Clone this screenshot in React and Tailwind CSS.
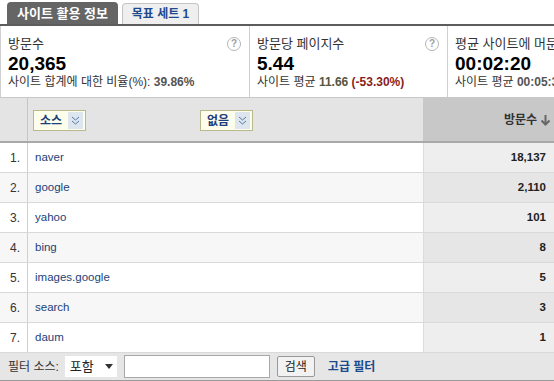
import React from 'react';

const rows = [
  { n: '1.', src: 'naver', v: '18,137' },
  { n: '2.', src: 'google', v: '2,110' },
  { n: '3.', src: 'yahoo', v: '101' },
  { n: '4.', src: 'bing', v: '8' },
  { n: '5.', src: 'images.google', v: '5' },
  { n: '6.', src: 'search', v: '3' },
  { n: '7.', src: 'daum', v: '1' },
];

function Help() {
  return (
    <div className="absolute right-[8px] top-[11px] flex h-[14px] w-[14px] items-center justify-center rounded-full border border-[#b5b5b5] text-[10px] font-bold leading-none text-[#a0a0a0]">
      ?
    </div>
  );
}

function Chevrons() {
  return (
    <div className="flex h-[17px] w-[15px] items-center justify-center bg-[#dde6ee]">
      <svg width="9" height="11" viewBox="0 0 9 11" fill="none" stroke="#5578a8" strokeWidth="1">
        <polyline points="1,2 4.5,5 8,2" />
        <polyline points="1,6 4.5,9 8,6" />
      </svg>
    </div>
  );
}

function DimSelect({ label }) {
  return (
    <div className="flex h-[21px] w-[53px] items-center justify-between border border-[#b9b98e] bg-[#fdfdec] pl-[6px] pr-[2px]">
      <span className="text-[12px] font-bold leading-none text-[#1c3f7c]">{label}</span>
      <Chevrons />
    </div>
  );
}

export default function App() {
  return (
    <div
      className="relative h-[381px] w-[554px] overflow-hidden bg-white text-[#333]"
      style={{ fontFamily: '"Liberation Sans", "Noto Sans CJK KR", sans-serif' }}
    >
      {/* tabs */}
      <div className="flex h-[24px] items-end gap-[4px] pl-[7px]">
        <div className="flex h-[22px] w-[111px] items-center justify-center rounded-t-[4px] bg-[#656565] text-[13px] font-bold leading-none text-white">
          사이트 활용 정보
        </div>
        <div className="flex h-[21px] w-[77px] items-center justify-center rounded-t-[4px] border border-b-0 border-[#c4c4c4] bg-[#efefef] text-[12px] font-bold leading-none text-[#1c4a8c]">
          목표 세트 1
        </div>
      </div>
      <div className="h-[2px] bg-[#5c5c5c]" />

      {/* metrics */}
      <div className="flex h-[72px] border-b border-[#c8c8c8]">
        <div className="relative w-[250px] flex-none border-l border-r border-[#d0d0d0] px-[7px] pt-[10px]">
          <div className="text-[13px] leading-[16px] text-[#333]">방문수</div>
          <div className="mt-[1px] text-[19px] font-bold leading-[22px] text-black">20,365</div>
          <div className="text-[12px] leading-[15px] text-[#333]">
            사이트 합계에 대한 비율(%): <span className="font-semibold text-[#555]">39.86%</span>
          </div>
          <Help />
        </div>
        <div className="relative w-[198px] flex-none border-r border-[#d0d0d0] px-[7px] pt-[10px]">
          <div className="text-[13px] leading-[16px] text-[#333]">방문당 페이지수</div>
          <div className="mt-[1px] text-[19px] font-bold leading-[22px] text-black">5.44</div>
          <div className="whitespace-nowrap text-[12px] leading-[15px] text-[#333]">
            사이트 평균 <span className="font-bold text-[#555540]">11.66</span>{' '}
            <span className="font-bold text-[#8a1c1c]">(-53.30%)</span>
          </div>
          <Help />
        </div>
        <div className="w-[220px] flex-none whitespace-nowrap px-[7px] pt-[10px]">
          <div className="text-[13px] leading-[16px] text-[#333]">평균 사이트에 머문 시간</div>
          <div className="mt-[1px] text-[19px] font-bold leading-[22px] text-black">00:02:20</div>
          <div className="text-[12px] leading-[15px] text-[#333]">
            사이트 평균 <span className="font-bold text-[#555]">00:05:31</span>
          </div>
        </div>
      </div>

      {/* table header */}
      <div className="flex h-[45px] border-b-2 border-[#a9a9a9] bg-[#e4e4e4]">
        <div className="w-[28px] flex-none border-r border-[#c6c6c6]" />
        <div className="flex flex-1 items-start pl-[5px] pt-[12px]">
          <DimSelect label="소스" />
          <div className="ml-[114px]">
            <DimSelect label="없음" />
          </div>
        </div>
        <div className="flex w-[131px] flex-none items-center justify-end gap-[3px] bg-[#c8c8c8] pr-[3px]">
          <span className="text-[12px] font-bold leading-none text-[#333]">방문수</span>
          <svg width="11" height="12" viewBox="0 0 11 12" fill="none" stroke="#666" strokeWidth="2">
            <line x1="5.5" y1="1" x2="5.5" y2="10" />
            <polyline points="1.5,6.5 5.5,10.5 9.5,6.5" />
          </svg>
        </div>
      </div>

      {/* rows */}
      {rows.map((r, i) => (
        <div
          key={r.n}
          className={`flex h-[30px] border-b border-[#d9d9d9] ${i % 2 === 1 ? 'bg-[#f7f7f7]' : 'bg-white'}`}
        >
          <div className="flex w-[28px] flex-none items-center border-r border-[#cfcfcf] pl-[10px] text-[12px] text-[#333]">
            {r.n}
          </div>
          <div className="flex flex-1 items-center pl-[7px] text-[11.5px] text-[#1d3f7a]">{r.src}</div>
          <div
            className={`flex w-[131px] flex-none items-center justify-end border-l border-[#dcdcdc] pr-[8px] text-[11.5px] font-bold text-[#222] ${
              i % 2 === 1 ? 'bg-[#e6e6e6]' : 'bg-[#eeeeee]'
            }`}
          >
            {r.v}
          </div>
        </div>
      ))}

      {/* filter footer */}
      <div className="flex h-[28px] items-center border-b border-[#9a9a9a] bg-[#e6e6e6] pl-[8px]">
        <span className="text-[12px] text-[#333]">필터 소스:</span>
        <div className="ml-[6px] flex h-[21px] w-[52px] items-center justify-between bg-white pl-[5px] pr-[4px]">
          <span className="text-[13px] leading-none text-[#222]">포함</span>
          <svg width="8" height="5" viewBox="0 0 8 5">
            <polygon points="0,0 8,0 4,5" fill="#333" />
          </svg>
        </div>
        <div className="ml-[7px] h-[23px] w-[146px] border border-[#a8a8a8] bg-white" />
        <div className="ml-[7px] flex h-[21px] w-[38px] items-center justify-center rounded-[2px] border border-[#999] bg-[#f2f2f2] text-[12px] leading-none text-[#222]">
          검색
        </div>
        <span className="ml-[13px] text-[12px] font-bold text-[#1c4a8c]">고급 필터</span>
      </div>
    </div>
  );
}
